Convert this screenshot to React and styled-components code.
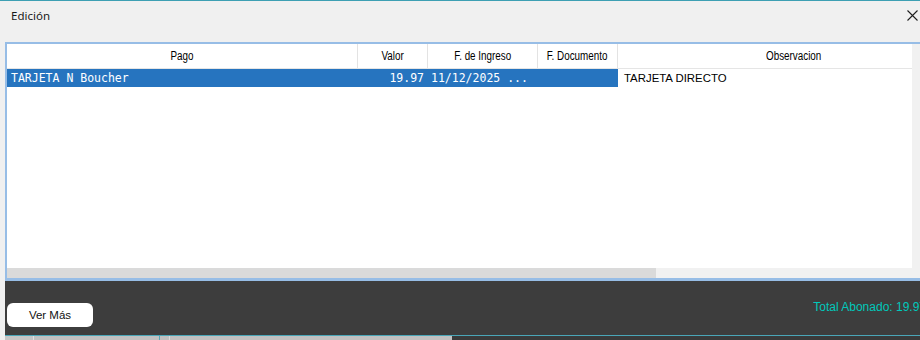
import React from "react";
import styled, { createGlobalStyle } from "styled-components";

const GlobalStyle = createGlobalStyle`
  html, body {
    margin: 0;
    padding: 0;
    width: 920px;
    height: 340px;
    overflow: hidden;
    background: #f0f0f0;
  }
  * { box-sizing: border-box; }
`;

const Window = styled.div`
  width: 920px;
  height: 340px;
  display: flex;
  flex-direction: column;
  background: #f0f0f0;
  border-top: 1px solid #3d9fb3;
  overflow: hidden;
`;

const TitleBar = styled.div`
  height: 41px;
  flex: none;
  display: flex;
  align-items: flex-start;
  justify-content: space-between;
  padding: 8px 2px 0 11px;
`;

const Title = styled.span`
  font-family: "Noto Sans", "Open Sans", sans-serif;
  font-size: 11.5px;
  line-height: 14px;
  color: #1a1a1a;
`;

const CloseButton = styled.button`
  border: 0;
  background: transparent;
  padding: 0;
  width: 11px;
  height: 11px;
  margin-top: 1px;
  display: flex;
  cursor: pointer;
`;

const Body = styled.div`
  flex: none;
  padding-left: 5px;
  display: flex;
  flex-direction: column;
`;

const Panel = styled.div`
  height: 239px;
  display: flex;
  border-top: 2px solid #97bde6;
  border-left: 2px solid #97bde6;
  border-bottom: 3px solid #97bde6;
  background: #ffffff;
`;

const TableViewport = styled.div`
  width: 905px;
  flex: none;
  display: flex;
  flex-direction: column;
  overflow: hidden;
`;

const VScroll = styled.div`
  flex: 1;
  background: #f1f1f1;
`;

const HeaderRow = styled.div`
  height: 25px;
  flex: none;
  display: flex;
  width: max-content;
  border-bottom: 1px solid #e5e5e5;
`;

const HeaderCell = styled.div`
  width: ${(p) => p.$w}px;
  flex: none;
  display: flex;
  align-items: center;
  justify-content: center;
  border-right: 1px solid #e3e3e3;
  overflow: hidden;
`;

const NarrowLabel = styled.span`
  display: inline-block;
  font-family: "Liberation Sans", Arial, sans-serif;
  font-size: 12px;
  color: #000;
  white-space: nowrap;
  transform: scaleX(0.82);
`;

const Rows = styled.div`
  height: 199px;
  flex: none;
  background: #fff;
`;

const Row = styled.div`
  height: 18px;
  display: flex;
  width: max-content;
`;

const Cell = styled.div`
  width: ${(p) => p.$w}px;
  flex: none;
  display: flex;
  align-items: center;
  justify-content: ${(p) => (p.$align === "right" ? "flex-end" : "flex-start")};
  padding: ${(p) => (p.$align === "right" ? "0 4px 0 0" : p.$pad || "0 0 0 4px")};
  background: ${(p) => (p.$selected ? "#2674bf" : "#ffffff")};
  color: ${(p) => (p.$selected ? "#ffffff" : "#000000")};
  font-family: ${(p) =>
    p.$mono
      ? `"DejaVu Sans Mono", "Liberation Mono", monospace`
      : `"Liberation Sans", Arial, sans-serif`};
  font-size: ${(p) => (p.$mono ? "11.5px" : "11.4px")};
  white-space: pre;
  overflow: hidden;
`;

const HScroll = styled.div`
  height: 10px;
  flex: none;
  background: #f1f1f1;
  display: flex;
`;

const HThumb = styled.div`
  width: 649px;
  background: #dadada;
`;

const Footer = styled.div`
  height: 54px;
  flex: none;
  display: flex;
  align-items: flex-start;
  padding: 18px 0 0 2px;
  background: #3d3d3d;
  overflow: hidden;
`;

const FooterButton = styled.button`
  margin-top: 4px;
  width: 86px;
  height: 24px;
  flex: none;
  border: 0;
  border-radius: 6px;
  background: #ffffff;
  font-family: "Liberation Sans", Arial, sans-serif;
  font-size: 11.5px;
  color: #111;
  padding: 0;
  cursor: pointer;
`;

const Total = styled.span`
  margin-left: auto;
  margin-right: -6px;
  flex: none;
  white-space: nowrap;
  font-family: "Liberation Sans", Arial, sans-serif;
  font-size: 12px;
  line-height: 16px;
  color: #00c8bb;
`;

const Backdrop = styled.div`
  flex: 1;
  display: flex;
  border-top: 1px solid #4aa6b8;
  margin-left: 5px;
`;

const BackSeg = styled.div`
  width: ${(p) => (p.$w ? `${p.$w}px` : "auto")};
  flex: ${(p) => (p.$w ? "none" : "1")};
  background: ${(p) => p.$bg};
  border-right: 1px solid ${(p) => p.$edge || "transparent"};
`;

const columns = [
  { label: "Pago", w: 351 },
  { label: "Valor", w: 70 },
  { label: "F. de Ingreso", w: 110 },
  { label: "F. Documento", w: 80 },
  { label: "Observacion", w: 352 },
];

const rows = [
  {
    pago: "TARJETA N Boucher",
    valor: "19.97",
    ingreso: "11/12/2025 ...",
    documento: "",
    obs: "TARJETA DIRECTO",
    selected: true,
  },
];

export default function App() {
  return (
    <>
      <GlobalStyle />
      <Window>
        <TitleBar>
          <Title>Edición</Title>
          <CloseButton aria-label="Cerrar">
            <svg width="11" height="11" viewBox="0 0 11 11">
              <path d="M0.5 0.5 L10.5 10.5 M10.5 0.5 L0.5 10.5" stroke="#1e1e1e" strokeWidth="1.1" fill="none" />
            </svg>
          </CloseButton>
        </TitleBar>
        <Body>
          <Panel>
            <TableViewport>
              <HeaderRow>
                {columns.map((c) => (
                  <HeaderCell key={c.label} $w={c.w}>
                    <NarrowLabel>{c.label}</NarrowLabel>
                  </HeaderCell>
                ))}
              </HeaderRow>
              <Rows>
                {rows.map((r, i) => (
                  <Row key={i}>
                    <Cell $w={columns[0].w} $mono $selected={r.selected}>{r.pago}</Cell>
                    <Cell $w={columns[1].w} $mono $align="right" $selected={r.selected}>{r.valor}</Cell>
                    <Cell $w={columns[2].w} $mono $pad="0 0 0 3px" $selected={r.selected}>{r.ingreso}</Cell>
                    <Cell $w={columns[3].w} $mono $selected={r.selected}>{r.documento}</Cell>
                    <Cell $w={columns[4].w} $pad="0 0 0 6px">{r.obs}</Cell>
                  </Row>
                ))}
              </Rows>
              <HScroll>
                <HThumb />
              </HScroll>
            </TableViewport>
            <VScroll />
          </Panel>
          <Footer>
            <FooterButton>Ver Más</FooterButton>
            <Total>Total Abonado: 19.97</Total>
          </Footer>
        </Body>
        <Backdrop>
          <BackSeg $w={29} $bg="#c6c6c6" $edge="#e0e0e0" />
          <BackSeg $w={126} $bg="#c1c1c1" $edge="#5aa9b8" />
          <BackSeg $w={10} $bg="#c1c1c1" $edge="#dcdcdc" />
          <BackSeg $w={282} $bg="#c1c1c1" />
          <BackSeg $bg="#3a3a3a" />
        </Backdrop>
      </Window>
    </>
  );
}
